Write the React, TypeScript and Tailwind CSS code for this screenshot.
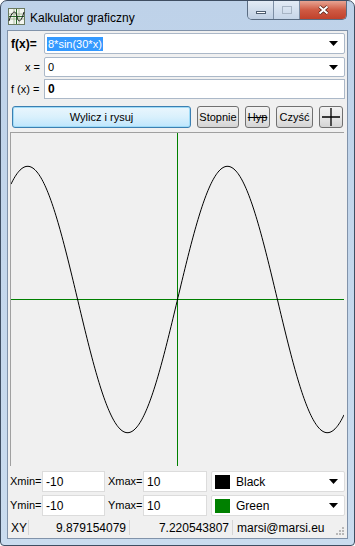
import React from "react";

const font = { fontFamily: '"Liberation Sans", Arial, sans-serif' };

function Arrow() {
  return (
    <svg width="9" height="5" viewBox="0 0 9 5" className="shrink-0">
      <path d="M0 0h9L4.5 5z" fill="#000" />
    </svg>
  );
}

function Combo({ children }: { children: React.ReactNode }) {
  return (
    <div className="flex h-full flex-1 items-center rounded-[2px] border border-[#abb8c8] bg-white pl-[2px] pr-[6px]">
      <div className="flex flex-1 items-center">{children}</div>
      <Arrow />
    </div>
  );
}

function Btn({ children, className = "" }: { children: React.ReactNode; className?: string }) {
  return (
    <div
      className={
        "flex h-full items-center justify-center rounded-[3px] border border-[#707070] bg-gradient-to-b from-[#f2f2f2] via-[#e8e8e8] to-[#d4d4d4] text-[11px] text-black " +
        className
      }
    >
      {children}
    </div>
  );
}

function Curve() {
  const pts: string[] = [];
  for (let px = 0; px <= 333; px += 1) {
    const x = (px - 166.5) / 16.65;
    const y = 8 * Math.sin((30 * x * Math.PI) / 180);
    pts.push(px + "," + (166.5 - y * 16.65).toFixed(2));
  }
  return (
    <svg width="333" height="333" viewBox="0 0 333 333" className="block">
      <rect x="166" y="0" width="1" height="333" fill="#008000" />
      <rect x="0" y="166" width="333" height="1" fill="#008000" />
      <polyline points={pts.join(" ")} fill="none" stroke="#000" strokeWidth="1" />
    </svg>
  );
}

function AppIcon() {
  return (
    <svg width="17" height="17" viewBox="0 0 17 17">
      <rect x="0.5" y="0.5" width="16" height="16" fill="#f4f6f0" stroke="#6a7a60" />
      <path d="M1 6h15M1 11h15M6 1v15M11 1v15" stroke="#9ab08a" strokeWidth="0.8" />
      <path d="M1 8.5h15M8.5 1v15" stroke="#2a6a2a" strokeWidth="1" />
      <path d="M1 13 C4 2, 8 2, 9 8.5 S13 15, 16 4" stroke="#1a1a1a" fill="none" strokeWidth="1" />
    </svg>
  );
}

export default function App() {
  return (
    <div className="h-[546px] w-[355px] overflow-hidden bg-white" style={font}>
      <div className="flex h-full w-full flex-col rounded-t-[7px] rounded-b-[4px] border border-[#3f4e62] bg-gradient-to-b from-[#bed2e9] to-[#cadcef]">
        {/* title bar */}
        <div className="flex h-[29px] shrink-0 items-start">
          <div className="ml-[7px] mt-[7px]">
            <AppIcon />
          </div>
          <div className="ml-[5px] mt-[8px] text-[12px] text-black">Kalkulator graficzny</div>
          <div className="flex-1" />
          <div className="mr-[7px] flex h-[19px] overflow-hidden rounded-b-[5px] border border-t-0 border-[#5a6c82]">
            <div className="flex w-[26px] items-center justify-center border-r border-[#7d8ea4] bg-gradient-to-b from-[#e3ebf5] to-[#bfcfe3]">
              <div className="mt-[4px] h-[3px] w-[10px] border border-[#4e5d70] bg-white" />
            </div>
            <div className="flex w-[26px] items-center justify-center border-r border-[#7d8ea4] bg-gradient-to-b from-[#e3ebf5] to-[#c6d5e8]">
              <div className="h-[8px] w-[10px] border border-[#a7b4c4] bg-transparent" />
            </div>
            <div className="flex w-[46px] items-center justify-center bg-gradient-to-b from-[#e7a493] via-[#cf5a43] to-[#c0412b]">
              <svg width="11" height="10" viewBox="0 0 11 10">
                <path d="M1.5 1.5l8 7M9.5 1.5l-8 7" stroke="#4a1a10" strokeWidth="3.4" />
                <path d="M1.5 1.5l8 7M9.5 1.5l-8 7" stroke="#fff" strokeWidth="2" />
              </svg>
            </div>
          </div>
        </div>

        {/* client area */}
        <div className="mx-[6px] flex flex-1 flex-col border border-[#8193aa] bg-[#f0f0f0] text-[11px] text-black">
          <div className="mt-[2px] flex h-[21px] items-center pr-[2px]">
            <div className="w-[36px] pl-[3px] text-[12px] font-bold">f(x)=</div>
            <Combo>
              <span className="bg-[#3399ff] px-[1px] leading-[14px] text-white">8*sin(30*x)</span>
            </Combo>
          </div>
          <div className="mt-[3px] flex h-[20px] items-center pr-[2px]">
            <div className="w-[36px] pr-[4px] text-right">x =</div>
            <Combo>
              <span className="pl-[1px]">0</span>
            </Combo>
          </div>
          <div className="mt-[2px] flex h-[20px] items-center pr-[2px]">
            <div className="w-[36px] pl-[3px]">f (x) =</div>
            <div className="flex h-full flex-1 items-center border border-[#abb8c8] bg-white pl-[3px] text-[12px] font-bold">
              0
            </div>
          </div>

          <div className="mt-[7px] flex h-[22px] items-stretch gap-[6px] pl-[4px] pr-[3px]">
            <div className="flex w-[179px] items-center justify-center rounded-[3px] border border-[#3c7fb1] bg-gradient-to-b from-[#eaf6fd] via-[#d9f0fc] to-[#bee6fd] text-[11px] shadow-[inset_0_0_0_1px_#9fdbf7]">
              Wylicz i rysuj
            </div>
            <Btn className="w-[42px]">Stopnie</Btn>
            <Btn className="w-[25px]">
              <span className="line-through">Hyp</span>
            </Btn>
            <Btn className="w-[37px]">Czyść</Btn>
            <Btn className="w-[24px]">
              <svg width="18" height="18" viewBox="0 0 18 18">
                <path d="M9 0v18M0 9h18" stroke="#000" strokeWidth="1.3" />
              </svg>
            </Btn>
          </div>

          <div className="ml-[2px] mt-[4px] h-[334px] w-[334px] border-l border-t border-[#a0a0a0] bg-[#f0f0f0]">
            <Curve />
          </div>

          <div className="mt-[5px] flex h-[21px] items-center pr-[2px]">
            <div className="w-[34px] pl-[2px]">Xmin=</div>
            <div className="flex h-full w-[63px] items-center border border-[#dcdcdc] bg-white pl-[3px] text-[12px]">-10</div>
            <div className="w-[38px] pl-[3px]">Xmax=</div>
            <div className="flex h-full w-[64px] items-center border border-[#dcdcdc] bg-white pl-[3px] text-[12px]">10</div>
            <div className="ml-[4px] flex h-full flex-1 items-center rounded-[2px] border border-[#dcdcdc] bg-white pl-[3px] pr-[6px] text-[12px]">
              <div className="h-[14px] w-[15px] bg-black" />
              <span className="ml-[6px] flex-1">Black</span>
              <Arrow />
            </div>
          </div>
          <div className="mt-[3px] flex h-[21px] items-center pr-[2px]">
            <div className="w-[34px] pl-[2px]">Ymin=</div>
            <div className="flex h-full w-[63px] items-center border border-[#dcdcdc] bg-white pl-[3px] text-[12px]">-10</div>
            <div className="w-[38px] pl-[3px]">Ymax=</div>
            <div className="flex h-full w-[64px] items-center border border-[#dcdcdc] bg-white pl-[3px] text-[12px]">10</div>
            <div className="ml-[4px] flex h-full flex-1 items-center rounded-[2px] border border-[#dcdcdc] bg-white pl-[3px] pr-[6px] text-[12px]">
              <div className="h-[14px] w-[15px] bg-[#008000]" />
              <span className="ml-[6px] flex-1">Green</span>
              <Arrow />
            </div>
          </div>

          {/* status bar */}
          <div className="mt-[2px] flex h-[19px] items-center text-[12px]">
            <div className="w-[20px] pl-[3px]">XY</div>
            <div className="h-[15px] w-px bg-[#d5d5d5]" />
            <div className="w-[100px] pr-[3px] text-right">9.879154079</div>
            <div className="h-[15px] w-px bg-[#d5d5d5]" />
            <div className="w-[102px] pr-[3px] text-right">7.220543807</div>
            <div className="h-[15px] w-px bg-[#d5d5d5]" />
            <div className="flex-1 pl-[4px]">marsi@marsi.eu</div>
            <svg width="10" height="10" viewBox="0 0 10 10" className="mr-[2px] mt-[6px]">
              <g fill="#b8b8b8">
                <rect x="7" y="1" width="2" height="2" />
                <rect x="4" y="4" width="2" height="2" />
                <rect x="7" y="4" width="2" height="2" />
                <rect x="1" y="7" width="2" height="2" />
                <rect x="4" y="7" width="2" height="2" />
                <rect x="7" y="7" width="2" height="2" />
              </g>
            </svg>
          </div>
        </div>
        <div className="h-[6px] shrink-0" />
      </div>
    </div>
  );
}
